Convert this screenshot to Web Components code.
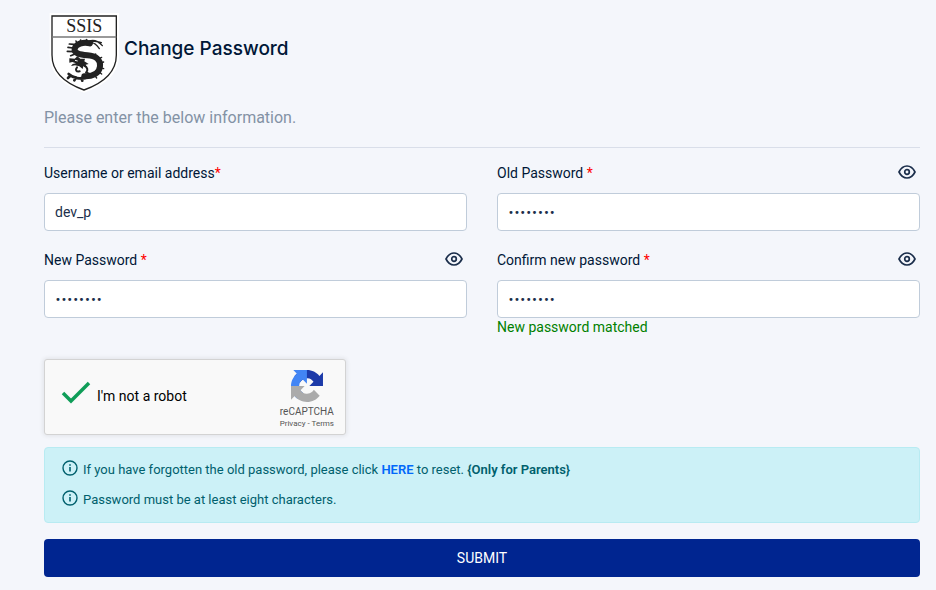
<!DOCTYPE html>
<html lang="en">
<head>
<meta charset="utf-8">
<meta name="viewport" content="width=device-width, initial-scale=1">
<title>Change Password</title>
<style>
body {
  margin: 0;
  background: #f4f6fb;
  color: #001737;
  font: 14px/20px Roboto, "Liberation Sans", sans-serif;
}
</style>
</head>
<body>
<change-password-page></change-password-page>

<template id="school-logo">
<style>
:host { display: block; }
svg { display: block; width: 71px; height: 81px; }
text { font: 54px "Liberation Serif", serif; fill: #222; }
</style>
<svg viewBox="27 21 213 243" role="img" aria-label="SSIS">
  <path d="M29 24H237V150C237 210 190 243 132 263C74 243 29 210 29 150Z" fill="#fff"/>
  <path d="M36 33H229V150C229 205 188 235 132 255C76 235 36 205 36 150Z" fill="#fff" stroke="#222" stroke-width="4"/>
  <path d="M36 96H229" stroke="#777" stroke-width="4"/>
  <text x="133" y="82" text-anchor="middle">SSIS</text>
  <g fill="none" stroke="#222" stroke-linecap="round">
    <path d="M150 115C128 109 107 118 104 131C101 146 121 149 142 151C168 153 182 163 180 184C178 208 154 215 133 214" stroke-width="18"/>
    <path d="M145 216C122 225 99 219 86 207M91 212L84 219M108 217L103 226M124 219L127 227" stroke-width="8"/>
    <path d="M146 109C163 102 177 111 187 122M151 113C162 111 170 119 178 131M149 108C164 110 175 109 184 113" stroke-width="4"/>
    <path d="M101 118L88 117M99 129L84 127M100 140L82 139M107 146L92 152M120 111L122 105M137 108L140 104M111 114L108 108" stroke-width="5"/>
    <path d="M174 162L185 157M181 174L191 171M182 188L191 191M177 201L185 207M164 211L170 219M160 154L167 147" stroke-width="4"/>
    <path d="M133 182C143 188 145 196 138 203M142 204L151 208M111 187C105 194 108 201 119 199" stroke-width="6"/>
  </g>
  <path d="M88 160L104 161L112 154L121 161L135 161L133 169L146 177L137 179L142 188L130 183L128 192L118 184L105 181L93 183L98 177L108 175L97 171L88 173Z" fill="#222"/>
  <path d="M105 166L113 168" stroke="#fff" stroke-width="3"/>
</svg>
</template>

<template id="form-field">
<style>
:host { display: block; }
.head { display: flex; justify-content: space-between; align-items: center; height: 20px; margin-bottom: 10px; }
.required { color: #f00; }
button { display: block; padding: 0; border: 0; background: none; color: #1b2e4b; cursor: pointer; }
button svg { display: block; width: 18px; height: 18px; margin: 0 4px 2px; }
.head button[hidden] { display: none; }
input {
  display: block;
  box-sizing: border-box;
  width: 100%;
  height: 38px;
  padding: 0 10px;
  border: 1px solid #c0ccda;
  border-radius: 4px;
  background: #fff;
  color: #1b2e4b;
  font: inherit;
}
input[type="password"] { font: 10px "DejaVu Sans", sans-serif; }
.hint { height: 18px; line-height: 18px; color: green; }
</style>
<div class="head">
  <label for="input"><slot></slot><span class="required">*</span></label>
  <button type="button" aria-label="Show password">
    <svg viewBox="0 0 18 18" fill="none" stroke="currentColor" stroke-width="1.7">
      <path d="M1 9C3 5 6 3 9 3S15 5 17 9C15 13 12 15 9 15S3 13 1 9Z" stroke-linejoin="round"/>
      <circle cx="9" cy="9" r="2.3"/>
    </svg>
  </button>
</div>
<input id="input">
<div class="hint"><slot name="hint"></slot></div>
</template>

<template id="captcha-box">
<style>
:host {
  display: flex;
  box-sizing: border-box;
  width: 302px;
  height: 76px;
  padding: 0 11px 0 16px;
  border: 1px solid #d3d3d3;
  border-radius: 3px;
  background: #f9f9f9;
  box-shadow: 0 0 4px 1px rgba(0, 0, 0, .08);
  color: #000;
  justify-content: space-between;
  align-items: center;
}
label { display: flex; align-items: center; gap: 6px; padding-bottom: 2px; }
.tick { display: grid; padding-bottom: 4px; }
.tick > * { grid-area: 1 / 1; margin: 0; width: 30px; height: 30px; }
input { appearance: none; }
input:not(:checked) { border: 2px solid #c1c1c1; border-radius: 2px; background: #fff; }
input:not(:checked) + svg { visibility: hidden; }
.tick svg { pointer-events: none; }
.brand { display: flex; flex-direction: column; align-items: center; padding-top: 6px; color: #555; font-size: 10px; line-height: 12px; }
.brand svg { width: 32px; height: 32px; margin-bottom: 4px; }
.links { font-size: 8px; }
a { color: inherit; text-decoration: none; }
</style>
<label>
  <span class="tick">
    <input type="checkbox" checked>
    <svg viewBox="0 0 30 30" fill="none" stroke="#0f9d58" stroke-width="3.5"><path d="M2 14L10 22L28 4"/></svg>
  </span>
  I'm not a robot
</label>
<div class="brand">
  <svg viewBox="0 0 64 64">
    <path d="M64 31.955l-.033-1.37V4.687l-7.16 7.16C50.948 4.674 42.033.093 32.05.093c-10.4 0-19.622 4.96-25.458 12.64l11.736 11.86a15.55 15.55 0 0 1 4.754-5.334c2.05-1.6 4.952-2.906 8.968-2.906.485 0 .86.057 1.135.163 4.976.393 9.288 3.14 11.828 7.124l-8.307 8.307L64 31.953" fill="#1c3aa9"/>
    <path d="M31.862.094l-1.37.033H4.594l7.16 7.16C4.58 13.147 0 22.06 0 32.046c0 10.4 4.96 19.622 12.64 25.458L24.5 45.768a15.55 15.55 0 0 1-5.334-4.754c-1.6-2.05-2.906-4.952-2.906-8.968 0-.485.057-.86.163-1.135.393-4.976 3.14-9.288 7.124-11.828l8.307 8.307L31.86.095" fill="#4285f4"/>
    <path d="M0 32.045l.033 1.37v25.898l7.16-7.16c5.86 7.173 14.774 11.754 24.76 11.754 10.4 0 19.622-4.96 25.458-12.64l-11.736-11.86a15.55 15.55 0 0 1-4.754 5.334c-2.05 1.6-4.952 2.906-8.968 2.906-.485 0-.86-.057-1.135-.163-4.976-.393-9.288-3.14-11.828-7.124l8.307-8.307c-10.522.04-22.4.066-27.295-.005" fill="#ababab"/>
  </svg>
  <span>reCAPTCHA</span>
  <span class="links"><a href="#privacy">Privacy</a> - <a href="#terms">Terms</a></span>
</div>
</template>

<template id="info-note">
<style>
:host { display: flex; gap: 5px; font-size: 13px; line-height: 20px; }
svg { flex: none; width: 16px; height: 16px; }
::slotted(a) { color: #0168fa; font-weight: 600; text-decoration: none; }
::slotted(strong) { font-weight: 600; }
</style>
<svg viewBox="0 0 16 16" fill="none" stroke="currentColor">
  <circle cx="8" cy="8" r="7" stroke-width="1.4"/>
  <path d="M8 7V11.5M8 4.2V5.8" stroke-width="1.6"/>
</svg>
<span><slot></slot></span>
</template>

<template id="change-password-page">
<style>
:host { display: block; padding: 12px 16px 12px 44px; }
header { display: flex; align-items: center; gap: 4px; padding-left: 5px; }
h1 { margin: 0 0 8px; font: 500 19px/24px Inter, sans-serif; }
.lead { margin: 15px 0 19px; color: #8392a5; font-size: 16px; line-height: 20px; }
hr { margin: 0 0 15px; border: 0; border-top: 1px solid #d9dee9; }
.fields { display: grid; grid-template-columns: 1fr 1fr; column-gap: 30px; margin-bottom: 22px; }
.fields form-field { min-height: 87px; }
.notes {
  display: grid;
  gap: 10px;
  margin: 12px 0 16px;
  padding: 12px 17px;
  border: 1px solid #b8ebf2;
  border-radius: 4px;
  background: #ccf1f7;
  color: #00606d;
}
.submit {
  display: block;
  width: 100%;
  height: 38px;
  border: 0;
  border-radius: 4px;
  background: #002590;
  color: #fff;
  font: inherit;
  cursor: pointer;
}
</style>
<header>
  <school-logo></school-logo>
  <h1>Change Password</h1>
</header>
<p class="lead">Please enter the below information.</p>
<hr>
<form>
  <div class="fields">
    <form-field value="dev_p">Username or email address</form-field>
    <form-field type="password" value="password">Old Password </form-field>
    <form-field type="password" value="password">New Password </form-field>
    <form-field type="password" value="password">Confirm new password <span slot="hint">New password matched</span></form-field>
  </div>
  <captcha-box></captcha-box>
  <div class="notes">
    <info-note>If you have forgotten the old password, please click <a href="#reset">HERE</a> to reset. <strong>{Only for Parents}</strong></info-note>
    <info-note>Password must be at least eight characters.</info-note>
  </div>
  <button class="submit">SUBMIT</button>
</form>
</template>

<script>
class TemplateElement extends HTMLElement {
  constructor() {
    super();
    const template = document.getElementById(this.localName);
    this.attachShadow({ mode: "open" });
    this.shadowRoot.appendChild(template.content.cloneNode(true));
  }
}

class FormField extends TemplateElement {
  connectedCallback() {
    const input = this.shadowRoot.querySelector("input");
    const toggle = this.shadowRoot.querySelector("button");

    input.type = this.getAttribute("type") || "text";
    input.value = this.getAttribute("value") || "";
    toggle.hidden = input.type !== "password";

    toggle.addEventListener("click", () => {
      input.type = input.type === "password" ? "text" : "password";
    });
  }
}

class ChangePasswordPage extends TemplateElement {
  connectedCallback() {
    this.shadowRoot.querySelector("form").addEventListener("submit", (e) => {
      e.preventDefault();
    });
  }
}

customElements.define("school-logo", class extends TemplateElement {});
customElements.define("form-field", FormField);
customElements.define("captcha-box", class extends TemplateElement {});
customElements.define("info-note", class extends TemplateElement {});
customElements.define("change-password-page", ChangePasswordPage);
</script>
</body>
</html>
